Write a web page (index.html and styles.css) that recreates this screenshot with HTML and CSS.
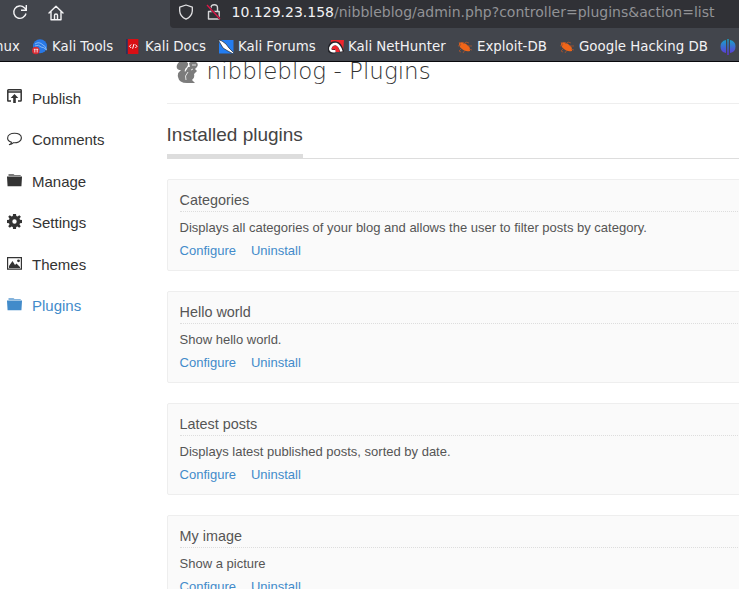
FILE: index.html
```html
<!DOCTYPE html>
<html lang="en">
<head>
<meta charset="utf-8">
<title>nibbleblog - Plugins</title>
<link rel="stylesheet" href="styles.css">
</head>
<body>
<header class="browser">
  <div class="toolbar">
    <svg class="reload" width="16" height="16" viewBox="0 0 16 16"><path d="M14 9.5A6.2 6.2 0 1 1 12.4 3.8L14 5.3M14.3 1v5.2H9" fill="none" stroke="#f4f4f6" stroke-width="1.4"/></svg>
    <svg class="home" width="16" height="16" viewBox="0 0 16 16"><path d="M1 8 8 1.2 15 8M3 6.5V14.7H13V6.5M6.5 14.5V10.2Q6.5 9 8 9T9.5 10.2V14.5" fill="none" stroke="#f4f4f6" stroke-width="1.4" stroke-linejoin="round" stroke-linecap="round"/></svg>
    <div class="address">
      <svg class="shield" width="16" height="16" viewBox="0 0 16 16"><path d="M8 1 14.3 3.2V7Q14 12.5 8 15.2 2 12.5 1.7 7V3.2Z" fill="none" stroke="#e2e2e4" stroke-width="1.3" stroke-linejoin="round"/></svg>
      <svg class="lock" width="16" height="18" viewBox="0 0 16 18"><path d="M5 8V5Q5 1.7 8.3 1.7T11.5 5V8M2.5 8.5H13.2V16H2.5Z" fill="none" stroke="#d6d6d8" stroke-width="1.4" stroke-linejoin="round"/><path d="M1 2 14 16" stroke="#303136" stroke-width="2.4"/><path d="M1 2 14 16" stroke="#df1648" stroke-width="1.3"/></svg>
      <span class="url"><b>10.129.23.158</b>/nibbleblog/admin.php?controller=plugins&amp;action=list</span>
    </div>
  </div>
  <nav class="bookmarks">
    <a class="linux"><span>nux</span></a>
    <a class="tools"><svg width="16" height="16" viewBox="0 0 16 16"><circle cx="8" cy="7.2" r="7" fill="#2878e5"/><path d="M3 5Q7 2 11 6Q14 7 14.5 11Q12 8 9 8 7 5 3 7" fill="none" stroke="#9bc7fb" stroke-width=".8"/><circle cx="3.8" cy="11.5" r="3.8" fill="#d82a32"/><path d="M1.8 10.3H3.7M2.8 10.3V13.5M4.2 10.3H6.2M5.2 10.3V13.5" stroke="#fff" stroke-width=".8"/></svg><span>Kali Tools</span></a>
    <a class="docs"><svg width="16" height="16" viewBox="0 0 16 16"><path d="M2 0H13.4V15H2Z" fill="#d90f14"/><path d="M1 0H2.8V15H1Z" fill="#27345c"/><path d="M6.2 5.5 4.5 7.3 6.2 9M10.3 5.5 12 7.3 10.3 9M9 5 7.6 9.7" fill="none" stroke="#fff" stroke-width="1"/></svg><span>Kali Docs</span></a>
    <a class="forums"><svg width="16" height="16" viewBox="0 0 16 16"><path d="M1 1H15.5V14.5H1Z" fill="#237df0"/><path d="M0 .5 4 2 8 5 11 9 15.5 13.5 14.5 14.5 9 11.5 5 9Z" fill="#fff" stroke="#23272d" stroke-width=".7"/></svg><span>Kali Forums</span></a>
    <a class="hunter"><svg width="16" height="16" viewBox="0 0 16 16"><path d="M3 1H16L15 13H2Z" fill="#ef252d"/><path d="M7.5 12Q1 14 1.8 9 3 4 8 4.5 12 5 14 13" fill="none" stroke="#222329" stroke-width="4.2"/><path d="M7.5 12Q1.5 13 2.3 9 4 4.5 8 5 11.5 6 13.5 12.5" fill="none" stroke="#fff" stroke-width="2.5"/></svg><span>Kali NetHunter</span></a>
    <a class="exploit"><svg width="16" height="16" viewBox="0 0 16 16"><path d="M2 4Q6 2 9 5 14 8 13 12 8 13 5 10 2 8 2 4" fill="#f06518"/><path d="M1 7 4 6 2 3M5 3 7 5 9 3 12 4M9 5 11 7 15 7M5 9 2 12 4 13M8 11 6 14M12 10 15 11" fill="none" stroke="#a8542f" stroke-width=".8"/></svg><span>Exploit-DB</span></a>
    <a class="google"><svg width="16" height="16" viewBox="0 0 16 16"><path d="M2 4Q6 2 9 5 14 8 13 12 8 13 5 10 2 8 2 4" fill="#f06518"/><path d="M1 7 4 6 2 3M5 3 7 5 9 3 12 4M9 5 11 7 15 7M5 9 2 12 4 13M8 11 6 14M12 10 15 11" fill="none" stroke="#a8542f" stroke-width=".8"/></svg><span>Google Hacking DB</span></a>
    <a class="offsec"><svg width="16" height="16" viewBox="0 0 16 16"><defs><linearGradient id="g" x2="0" y2="1"><stop stop-color="#16a6c7"/><stop offset="1" stop-color="#6430dc"/></linearGradient></defs><path d="M6 1V14Q.5 13 .5 7.5T6 1M10 1V14Q15.5 13 15.5 7.5T10 1M7.3 0H8.7V16H7.3Z" fill="url(#g)"/></svg></a>
  </nav>
</header>
<div class="page">
  <aside>
    <a><svg width="15" height="15" viewBox="0 0 15 15"><path d="M4 12H1.2Q.8 12 .8 11.2V1.5Q.8.8 1.5.8H13.5Q14.2.8 14.2 1.5V11.2Q14.2 12 13.5 12H11M1 3H14" fill="none" stroke="currentColor" stroke-width="1.5"/><path d="M7.5 5 11.3 9H8.8V14H6.2V9H3.7Z" fill="currentColor"/></svg>Publish</a>
    <a><svg width="15" height="15" viewBox="0 0 15 15"><path d="M4.5 11.2Q.6 10 .6 7.2C.6.6 14.4.6 14.4 6.8 14.4 11 9.5 12 6.5 11.7Q5 13.6 2 13.8 4.5 12.8 4.5 11.2Z" fill="none" stroke="currentColor" stroke-width="1.1"/></svg>Comments</a>
    <a><svg width="15" height="15" viewBox="0 0 15 15"><path d="M1.5 4V2H6.5L7.5 3H13.7V4Z" fill="currentColor" opacity=".65"/><path d="M0 4.5H15L14.4 14.3H.6Z" fill="currentColor"/></svg>Manage</a>
    <a><svg width="15" height="15" viewBox="0 0 15 15"><path fill-rule="evenodd" fill="currentColor" d="M6 0H9L9.3 2.1 10.6 2.6 12.3 1.2 13.9 2.8 12.5 4.5 13 5.8 15 6V9L13 9.3 12.5 10.5 13.8 12.2 12.2 13.8 10.5 12.5 9.2 13 9 15H6L5.8 13 4.5 12.5 2.8 13.8 1.2 12.2 2.5 10.5 2 9.2 0 9V6L2 5.8 2.5 4.5 1.2 2.8 2.8 1.2 4.5 2.5 5.8 2ZM7.5 5.3A2.2 2.2 0 1 0 7.5 9.7 2.2 2.2 0 1 0 7.5 5.3"/></svg>Settings</a>
    <a><svg width="15" height="15" viewBox="0 0 15 15"><path d="M.6 2.6H14.4V14.2H.6Z" fill="none" stroke="currentColor" stroke-width="1.2"/><path d="M2 13V11L5.5 6 8 10 9.5 8.5 13 12V13Z" fill="currentColor"/><circle cx="11.5" cy="5.8" r="1.4" fill="currentColor"/></svg>Themes</a>
    <a class="active"><svg width="15" height="15" viewBox="0 0 15 15"><path d="M1.5 4V2H6.5L7.5 3H13.7V4Z" fill="currentColor" opacity=".65"/><path d="M0 4.5H15L14.4 14.3H.6Z" fill="currentColor"/></svg>Plugins</a>
  </aside>
  <main>
    <div class="title"><svg width="24" height="26" viewBox="0 0 24 26"><path d="M12 25Q4 25 3 19 2 15 6 12 .5 12 2 7 4 2 10 3 15 5 12 9 9 11 10 14L12 11Q13 8 15 9L14 5 17 3 21 4Q24 6 22 9L20 11 22 13 19 16Q20 20 17 22L20 25Z" fill="#7c7c7c"/><path d="M11 22Q9 18 13 14M17 7 21 7M16 12 18 11" fill="none" stroke="#fff" stroke-width=".8"/></svg><h1>nibbleblog - Plugins</h1></div>
    <div class="section"><h2>Installed plugins</h2></div>
    <article><h3>Categories</h3><p>Displays all categories of your blog and allows the user to filter posts by category.</p><div class="actions"><a>Configure</a><a>Uninstall</a></div></article>
    <article><h3>Hello world</h3><p>Show hello world.</p><div class="actions"><a>Configure</a><a>Uninstall</a></div></article>
    <article><h3>Latest posts</h3><p>Displays latest published posts, sorted by date.</p><div class="actions"><a>Configure</a><a>Uninstall</a></div></article>
    <article><h3>My image</h3><p>Show a picture</p><div class="actions"><a>Configure</a><a>Uninstall</a></div></article>
  </main>
</div>
</body>
</html>
```
FILE: styles.css
```css
* { box-sizing: border-box; }
body { margin: 0; height: 589px; overflow: hidden; display: flex; flex-direction: column; background: #fff; color: #555; font-family: "Liberation Sans", Arial, sans-serif; }
svg { display: block; flex: none; }
h1, h2, h3, p { margin: 0; font-weight: 400; }

.browser { flex: none; height: 62px; background: #42454c; border-bottom: 1px solid #08080c; color: #f2f2f4; font-family: "DejaVu Sans", sans-serif; overflow: hidden; }
.toolbar { display: flex; height: 28px; }
.reload { margin: 4px 0 0 12px; }
.home { margin: 5px 0 0 20px; }
.address { display: flex; flex: 1; margin-left: 106px; background: #303136; border-radius: 0 0 0 4px; }
.shield { margin: 4px 0 0 8px; }
.lock { margin: 3px 0 0 12px; }
.url { margin-left: 9.6px; font-size: 14px; line-height: 25px; white-space: nowrap; color: #929396; }
.url b { font-weight: 400; color: #f2f2f4; }
.bookmarks { display: grid; grid-template-columns: 32px 93px 93px 110px 129px 102px 161px 16px; height: 33px; padding-top: 4px; font-size: 13.35px; white-space: nowrap; }
.bookmarks a { display: flex; align-items: center; gap: 4px; }
.linux span { margin-left: -5px; }

.page { display: flex; flex: 1; min-height: 0; overflow: hidden; }
aside { width: 166.6px; flex: none; padding: 15.8px 0 0 7px; color: #333; font-size: 15px; }
aside a { display: flex; align-items: center; gap: 10px; height: 41.4px; }
aside svg { margin-bottom: 3px; }
aside .active { color: #428bca; }
main { flex: 1; min-width: 0; }
.title { display: flex; height: 42px; border-bottom: 1px solid #eee; }
.title svg { margin: -4px 0 0 8px; }
h1 { margin: -6px 0 0 8px; font: 200 23px/31px "DejaVu Sans", "DejaVu Sans Light", sans-serif; color: #333; white-space: nowrap; }
.section { height: 55px; border-bottom: 1px solid #ddd; margin-bottom: 20px; }
h2 { width: max-content; height: 54px; padding-top: 20px; border-bottom: 4px solid #ddd; font-size: 19px; line-height: 22px; color: #444; }
article { width: 700px; height: 92px; margin-bottom: 20px; padding: 10px 12px; border: 1px solid #eee; border-radius: 2px; background: #fafafa; }
h3 { height: 22px; border-bottom: 1px dotted #ddd; font-size: 14.4px; line-height: 21px; }
p { margin-top: 7px; font-size: 13px; line-height: 18px; }
.actions { display: flex; gap: 15px; margin-top: 5px; font-size: 13px; line-height: 18px; color: #428bca; }
```
